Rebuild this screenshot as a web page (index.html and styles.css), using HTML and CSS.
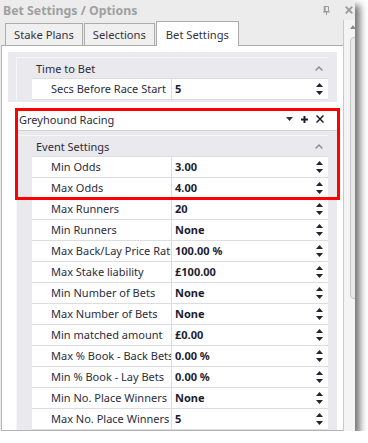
FILE: index.html
```html
<!DOCTYPE html>
<html>
<head>
<meta charset="utf-8">
<link rel="stylesheet" href="styles.css">
</head>
<body>
<div class="window">
  <div class="titlebar">
    <span class="title">Bet Settings / Options</span>
    <span class="tb-icons">
      <svg width="7" height="9" viewBox="0 0 7 9"><path d="M2 0.5H5.5V5.5H2Z" fill="none" stroke="#9a9a9a" stroke-width="1"/><path d="M1.5 0V6" stroke="#9a9a9a" stroke-width="1.5"/><path d="M0 6H7M3.5 6V9" stroke="#9a9a9a" stroke-width="1"/></svg>
      <svg width="8" height="8" viewBox="0 0 8 8"><path d="M0.7 0.7L7.3 7.3M7.3 0.7L0.7 7.3" stroke="#9a9a9a" stroke-width="1.8"/></svg>
    </span>
  </div>
  <div class="main">
    <div class="tabctl">
      <div class="tabstrip">
        <div class="tab">Stake Plans</div>
        <div class="tab">Selections</div>
        <div class="tab active">Bet Settings</div>
      </div>
      <div class="panel">
        <div class="block block-time">
          <div class="cat">
            <div class="cat-head"><span>Time to Bet</span><svg class="caret" width="8" height="5" viewBox="0 0 8 5"><path d="M0.6 4.4L4 1L7.4 4.4" fill="none" stroke="#8c8c99" stroke-width="1.4"/></svg></div>
            <div class="row"><div class="lbl">Secs Before Race Start</div><div class="val">5</div><svg class="spin" width="7" height="12" viewBox="0 0 7 12"><path d="M3.5 0L7 4H0Z M0 8H7L3.5 12Z" fill="#222230"/></svg></div>
          </div>
        </div>
        <div class="block block-grey">
          <div class="item-head">
            <span class="item-title">Greyhound Racing</span>
            <span class="item-icons">
              <svg width="7" height="4" viewBox="0 0 7 4"><path d="M0 0H7L3.5 4Z" fill="#333340"/></svg>
              <svg width="7" height="7" viewBox="0 0 7 7"><path d="M3.5 0V7M0 3.5H7" stroke="#1e1e28" stroke-width="2"/></svg>
              <svg width="8" height="8" viewBox="0 0 8 8"><path d="M0.5 0.5L7.5 7.5M7.5 0.5L0.5 7.5" stroke="#1e1e28" stroke-width="1.5"/></svg>
            </span>
          </div>
          <div class="cat">
            <div class="cat-head"><span>Event Settings</span><svg class="caret" width="8" height="5" viewBox="0 0 8 5"><path d="M0.6 4.4L4 1L7.4 4.4" fill="none" stroke="#8c8c99" stroke-width="1.4"/></svg></div>
            <div class="row"><div class="lbl">Min Odds</div><div class="val">3.00</div><svg class="spin" width="7" height="12" viewBox="0 0 7 12"><path d="M3.5 0L7 4H0Z M0 8H7L3.5 12Z" fill="#222230"/></svg></div>
            <div class="row"><div class="lbl">Max Odds</div><div class="val">4.00</div><svg class="spin" width="7" height="12" viewBox="0 0 7 12"><path d="M3.5 0L7 4H0Z M0 8H7L3.5 12Z" fill="#222230"/></svg></div>
            <div class="row"><div class="lbl">Max Runners</div><div class="val">20</div><svg class="spin" width="7" height="12" viewBox="0 0 7 12"><path d="M3.5 0L7 4H0Z M0 8H7L3.5 12Z" fill="#222230"/></svg></div>
            <div class="row"><div class="lbl">Min Runners</div><div class="val">None</div><svg class="spin" width="7" height="12" viewBox="0 0 7 12"><path d="M3.5 0L7 4H0Z M0 8H7L3.5 12Z" fill="#222230"/></svg></div>
            <div class="row"><div class="lbl">Max Back/Lay Price Ratio</div><div class="val">100.00 %</div><svg class="spin" width="7" height="12" viewBox="0 0 7 12"><path d="M3.5 0L7 4H0Z M0 8H7L3.5 12Z" fill="#222230"/></svg></div>
            <div class="row"><div class="lbl">Max Stake liability</div><div class="val">£100.00</div><svg class="spin" width="7" height="12" viewBox="0 0 7 12"><path d="M3.5 0L7 4H0Z M0 8H7L3.5 12Z" fill="#222230"/></svg></div>
            <div class="row"><div class="lbl">Min Number of Bets</div><div class="val">None</div><svg class="spin" width="7" height="12" viewBox="0 0 7 12"><path d="M3.5 0L7 4H0Z M0 8H7L3.5 12Z" fill="#222230"/></svg></div>
            <div class="row"><div class="lbl">Max Number of Bets</div><div class="val">None</div><svg class="spin" width="7" height="12" viewBox="0 0 7 12"><path d="M3.5 0L7 4H0Z M0 8H7L3.5 12Z" fill="#222230"/></svg></div>
            <div class="row"><div class="lbl">Min matched amount</div><div class="val">£0.00</div><svg class="spin" width="7" height="12" viewBox="0 0 7 12"><path d="M3.5 0L7 4H0Z M0 8H7L3.5 12Z" fill="#222230"/></svg></div>
            <div class="row"><div class="lbl">Max % Book - Back Bets</div><div class="val">0.00 %</div><svg class="spin" width="7" height="12" viewBox="0 0 7 12"><path d="M3.5 0L7 4H0Z M0 8H7L3.5 12Z" fill="#222230"/></svg></div>
            <div class="row"><div class="lbl">Min % Book - Lay Bets</div><div class="val">0.00 %</div><svg class="spin" width="7" height="12" viewBox="0 0 7 12"><path d="M3.5 0L7 4H0Z M0 8H7L3.5 12Z" fill="#222230"/></svg></div>
            <div class="row"><div class="lbl">Min No. Place Winners</div><div class="val">None</div><svg class="spin" width="7" height="12" viewBox="0 0 7 12"><path d="M3.5 0L7 4H0Z M0 8H7L3.5 12Z" fill="#222230"/></svg></div>
            <div class="row"><div class="lbl">Max No. Place Winners</div><div class="val">5</div><svg class="spin" width="7" height="12" viewBox="0 0 7 12"><path d="M3.5 0L7 4H0Z M0 8H7L3.5 12Z" fill="#222230"/></svg></div>
          </div>
        </div>
        <div class="highlight"></div>
      </div>
    </div>
    <div class="scrollcol">
      <svg class="sb-up" width="6" height="4" viewBox="0 0 6 4"><path d="M3 0L6 4H0Z" fill="#8a8a8a"/></svg>
      <div class="sb-thumb"></div>
    </div>
  </div>
</div>
</body>
</html>
```
FILE: styles.css
```css
html, body {
  margin: 0;
  padding: 0;
  background: #ffffff;
}
body {
  font-family: "Noto Sans", "Open Sans", sans-serif;
  font-size: 11px;
  color: #2c2c3c;
}
.window {
  width: 355px;
  height: 431px;
  background: #ececec;
  box-shadow: 5px 5px 7px rgba(0, 0, 0, 0.55);
  display: flex;
  flex-direction: column;
  overflow: hidden;
}
.titlebar {
  height: 20px;
  flex: none;
  display: flex;
  align-items: center;
  padding: 0 2px 0 3px;
}
.title {
  font-weight: 700;
  font-size: 12.3px;
  color: #a0a0a0;
}
.tb-icons {
  margin-left: auto;
  display: flex;
  align-items: center;
  gap: 15px;
}
.main {
  flex: 1;
  display: flex;
  min-height: 0;
}
.tabctl {
  width: 343px;
  flex: none;
  display: flex;
  flex-direction: column;
}
.tabstrip {
  height: 25px;
  flex: none;
  display: flex;
  align-items: flex-end;
  gap: 1px;
  padding-left: 5px;
}
.tab {
  height: 22px;
  box-sizing: border-box;
  border: 1px solid #ababab;
  border-bottom: none;
  background: #f0f0f0;
  padding: 0 8px;
  font-size: 11.2px;
  color: #333340;
  display: flex;
  align-items: center;
}
.tab.active {
  height: 25px;
  margin-bottom: -1px;
  padding: 0 9px;
  background: #ffffff;
  position: relative;
  z-index: 1;
}
.panel {
  flex: 1;
  min-height: 0;
  margin-left: 1px;
  border-left: 1px solid #b4b4b4;
  border-top: 1px solid #ababab;
  border-bottom: 1px solid #b4b4b4;
  background: #ffffff;
  position: relative;
  overflow: hidden;
}
.block {
  background: #e9e9ee;
}
.block-time {
  margin: 6px 6px 0 6px;
  padding: 5px 9px 2px 8px;
}
.block-grey {
  margin: 6px 6px 0 14px;
  padding-bottom: 2px;
}
.item-head {
  height: 22px;
  border-bottom: 1px solid #d4d4d8;
  background: #ffffff;
  display: flex;
  align-items: center;
  padding: 0 13px 0 3px;
}
.item-icons {
  margin-left: auto;
  display: flex;
  align-items: center;
  gap: 8px;
}
.block-grey .cat {
  margin: 4px 9px 0 0;
}
.cat {
  border-top: 1px solid #f7f7f9;
  border-left: 1px solid #f7f7f9;
}
.cat-head {
  height: 20px;
  display: flex;
  align-items: center;
  padding: 0 5px 0 19px;
}
.caret {
  margin-left: auto;
}
.row {
  display: flex;
  height: 20px;
  border-top: 1px solid #dcdce2;
  background: #ffffff;
  margin-left: 15px;
}
.row:last-child {
  border-bottom: 1px solid #dcdce2;
}
.lbl {
  width: 140px;
  flex: none;
  box-sizing: border-box;
  border-right: 1px solid #dcdce2;
  padding-left: 19px;
  white-space: nowrap;
  overflow: hidden;
  line-height: 20px;
}
.val {
  flex: 1;
  padding-left: 3px;
  font-weight: 700;
  color: #1c1c30;
  line-height: 20px;
  white-space: nowrap;
}
.spin {
  flex: none;
  margin: 4px 5px 0 0;
}
.highlight {
  position: absolute;
  left: 13px;
  top: 62px;
  width: 325px;
  height: 92px;
  box-sizing: border-box;
  border: 3px solid #ff0000;
}
.scrollcol {
  flex: 1;
  border-left: 1px solid #c9c9c9;
  background: #f4f4f4;
  display: flex;
  flex-direction: column;
  padding: 5px 0 0 6px;
}
.sb-up {
  flex: none;
}
.sb-thumb {
  margin-top: 8px;
  width: 10px;
  height: 260px;
  border: 1px solid #c5c5c5;
  border-radius: 4px 0 0 4px;
  background: #e9e9e9;
}
```
